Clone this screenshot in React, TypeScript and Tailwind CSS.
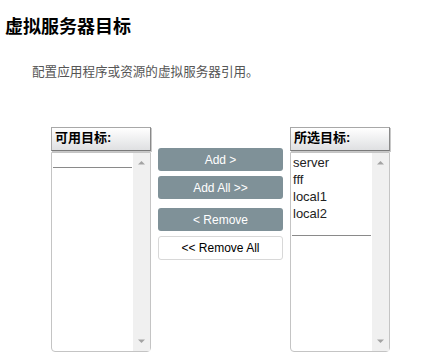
import React from 'react'

const font = { fontFamily: '"Liberation Sans", Arial, "Noto Sans CJK SC", sans-serif' }

function ScrollArrows() {
  return (
    <div className="flex w-[17px] shrink-0 flex-col justify-between bg-[#f0f0f0] py-[6px]">
      <svg width="17" height="6" viewBox="0 0 17 6">
        <path d="M5 5.5 L8.5 2 L12 5.5 Z" fill="#a3a3a3" />
      </svg>
      <svg width="17" height="6" viewBox="0 0 17 6">
        <path d="M5 0.5 L8.5 4 L12 0.5 Z" fill="#a3a3a3" />
      </svg>
    </div>
  )
}

function ListPanel({ title, items }: { title: string; items: string[] }) {
  return (
    <div className="flex w-[100px] flex-col">
      <div className="h-[24px] border border-[#a8a8a8] border-b-[#7a7a7a] border-r-[#8a8a8a] bg-gradient-to-b from-white to-[#dfe0e2] pl-[3px] text-[13px] font-bold leading-[20px] text-black shadow-[1px_1px_0_#c8c8c8]">
        {title}
      </div>
      <div className="mt-[1px] flex h-[200px] rounded-b-[4px] border border-[#c4c4c4] bg-white">
        <div className="flex-1 pl-[1px] pt-[1px] text-[13px] leading-[17px] text-[#222]">
          {items.map((it) => (
            <div key={it} className="pl-[1px]">
              {it}
            </div>
          ))}
          <div className="mt-[13px] mr-[1px] border-t border-[#8a8a8a]" />
        </div>
        <ScrollArrows />
      </div>
    </div>
  )
}

export default function App() {
  return (
    <div className="h-[360px] w-[447px] bg-white" style={font}>
      <h1 className="pl-[5px] pt-[17px] text-[18px] font-bold leading-[20px] text-black">虚拟服务器目标</h1>
      <p className="pl-[32px] pt-[27px] text-[12.6px] leading-[16px] text-[#555]">配置应用程序或资源的虚拟服务器引用。</p>
      <div className="flex pl-[51px] pt-[47px]">
        <ListPanel title="可用目标:" items={[]} />
        <div className="ml-[7px] flex w-[125px] flex-col pt-[21px] text-[12px]">
          <button className="h-[23px] rounded-[3px] bg-[#7f9198] text-white">Add &gt;</button>
          <button className="mt-[5px] h-[23px] rounded-[3px] bg-[#7f9198] text-white">Add All &gt;&gt;</button>
          <button className="mt-[9px] h-[23px] rounded-[3px] bg-[#7f9198] text-white">&lt; Remove</button>
          <button className="mt-[5px] h-[24px] rounded-[3px] border border-[#d8d8d8] bg-white text-black">&lt;&lt; Remove All</button>
        </div>
        <div className="ml-[7px]">
          <ListPanel title="所选目标:" items={['server', 'fff', 'local1', 'local2']} />
        </div>
      </div>
    </div>
  )
}
